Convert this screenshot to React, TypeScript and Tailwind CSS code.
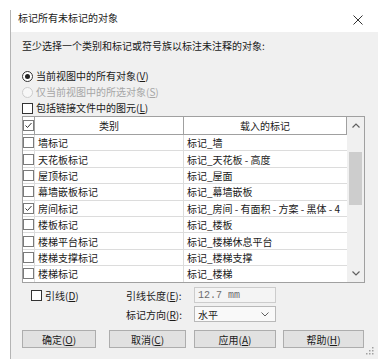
import React from "react";

const FONT = { fontFamily: '"Microsoft YaHei", "Noto Sans CJK SC", "Noto Sans", sans-serif' };

function Key({ k }: { k: string }) {
  return (
    <span>
      (<span className="underline underline-offset-[1px]">{k}</span>)
    </span>
  );
}

function Box({ checked, dark }: { checked?: boolean; dark?: boolean }) {
  return (
    <div
      className={
        "w-[11px] h-[11px] shrink-0 bg-white border flex items-center justify-center " +
        (dark ? "border-[#333333]" : "border-[#7a7a7a]")
      }
    >
      {checked && (
        <svg width="9" height="9" viewBox="0 0 9 9">
          <path d="M1.5 4.5 L3.5 6.5 L7.5 2" stroke="#333" fill="none" strokeWidth="1" />
        </svg>
      )}
    </div>
  );
}

const rows: [string, string, boolean][] = [
  ["墙标记", "标记_墙", false],
  ["天花板标记", "标记_天花板 - 高度", false],
  ["屋顶标记", "标记_屋面", false],
  ["幕墙嵌板标记", "标记_幕墙嵌板", false],
  ["房间标记", "标记_房间 - 有面积 - 方案 - 黑体 - 4", true],
  ["楼板标记", "标记_楼板", false],
  ["楼梯平台标记", "标记_楼梯休息平台", false],
  ["楼梯支撑标记", "标记_楼梯支撑", false],
  ["楼梯标记", "标记_楼梯", false],
];

function Btn({ w, ml, children }: { w: string; ml: string; children: React.ReactNode }) {
  return (
    <div
      className={
        w +
        " " +
        ml +
        " h-[18px] bg-[#e1e1e1] border border-[#adadad] flex items-center justify-center text-[10px] text-[#1a1a1a]"
      }
    >
      {children}
    </div>
  );
}

export default function App() {
  return (
    <div className="w-[378px] h-[359px] bg-white pt-[10px] overflow-hidden" style={FONT}>
      <div className="ml-[10px] h-[349px] border-l border-[#b4b4b4] flex flex-col">
        <div className="h-[22px] bg-white flex items-start justify-between pl-[7px] pr-[15px]">
          <span className="text-[10px] leading-[14px] mt-[1px] text-[#1a1a1a]">标记所有未标记的对象</span>
          <svg width="10" height="10" viewBox="0 0 10 10" className="mt-[5px]">
            <path d="M0.5 0.5 L9.5 9.5 M9.5 0.5 L0.5 9.5" stroke="#333" strokeWidth="1" />
          </svg>
        </div>
        <div className="flex-1 bg-[#f0f0f0] pl-[11px] flex flex-col text-[10px] text-[#1a1a1a] relative">
          <div className="mt-[7px] h-[14px] leading-[14px]">至少选择一个类别和标记或符号族以标注未注释的对象:</div>

          <div className="mt-[16px] h-[14px] flex items-center">
            <div className="w-[11px] h-[11px] rounded-full border border-[#333] bg-white flex items-center justify-center">
              <div className="w-[5px] h-[5px] rounded-full bg-[#222]" />
            </div>
            <span className="ml-[3px] leading-[14px]">
              当前视图中的所有对象<Key k="V" />
            </span>
          </div>
          <div className="mt-[2px] h-[14px] flex items-center text-[#a6a6a6]">
            <div className="w-[11px] h-[11px] rounded-full border border-[#cccccc] bg-[#f7f7f7]" />
            <span className="ml-[3px] leading-[14px]">
              仅当前视图中的所选对象<Key k="S" />
            </span>
          </div>
          <div className="mt-[2px] h-[14px] flex items-center">
            <Box dark />
            <span className="ml-[3px] leading-[14px]">
              包括链接文件中的图元<Key k="L" />
            </span>
          </div>

          <div className="mt-[1px] w-[343px] h-[167px] border border-[#a0a0a0] bg-white flex overflow-hidden">
            <div className="w-[324px] flex flex-col">
              <div className="h-[18px] flex shrink-0">
                <div className="w-[12px] border-r border-b border-[#a0a0a0] flex items-center justify-center">
                  <Box checked />
                </div>
                <div className="w-[149px] border-r border-b border-[#a0a0a0] flex items-center justify-center">
                  类别
                </div>
                <div className="flex-1 border-r border-b border-[#a0a0a0] flex items-center justify-center">
                  载入的标记
                </div>
              </div>
              {rows.map(([a, b, c]) => (
                <div key={a} className="h-[16.4px] shrink-0 flex border-b border-[#dcdcdc]">
                  <div className="w-[12px] border-r border-[#dcdcdc] flex items-center justify-center">
                    <Box checked={c} />
                  </div>
                  <div className="w-[149px] border-r border-[#dcdcdc] flex items-center pl-[3px] whitespace-nowrap overflow-hidden">
                    {a}
                  </div>
                  <div className="flex-1 flex items-center pl-[3px] whitespace-nowrap overflow-hidden">{b}</div>
                </div>
              ))}
            </div>
            <div className="w-[17px] bg-[#f0f0f0] flex flex-col">
              <div className="h-[17px] flex items-center justify-center">
                <svg width="8" height="5" viewBox="0 0 8 5">
                  <path d="M0.5 4.5 L4 1 L7.5 4.5" stroke="#606060" fill="none" strokeWidth="1.2" />
                </svg>
              </div>
              <div className="flex-1 px-[2px]">
                <div className="mt-[18px] h-[53px] bg-[#cdcdcd]" />
              </div>
              <div className="h-[17px] flex items-center justify-center">
                <svg width="8" height="5" viewBox="0 0 8 5">
                  <path d="M0.5 0.5 L4 4 L7.5 0.5" stroke="#606060" fill="none" strokeWidth="1.2" />
                </svg>
              </div>
            </div>
          </div>

          <div className="mt-[4px] h-[16px] flex items-center">
            <div className="w-[104px] pl-[9px] flex items-center">
              <Box dark />
              <span className="ml-[3px]">
                引线<Key k="D" />
              </span>
            </div>
            <div className="w-[68px]">
              引线长度<Key k="E" />:
            </div>
            <div
              className="w-[82px] h-[16px] border border-[#cccccc] bg-[#f4f4f4] flex items-center pl-[3px] text-[10px] text-[#6d6d6d]"
              style={{ fontFamily: '"Liberation Mono", monospace' }}
            >
              12.7 mm
            </div>
          </div>
          <div className="mt-[3px] h-[16px] flex items-center">
            <div className="w-[104px]" />
            <div className="w-[68px]">
              标记方向<Key k="R" />:
            </div>
            <div className="w-[82px] h-[16px] border border-[#b9b9b9] bg-[#f9f9f9] flex items-center justify-between pl-[3px] pr-[6px]">
              <span>水平</span>
              <svg width="8" height="5" viewBox="0 0 8 5">
                <path d="M0.5 0.5 L4 4 L7.5 0.5" stroke="#606060" fill="none" strokeWidth="1" />
              </svg>
            </div>
          </div>

          <div className="mt-[8px] flex">
            <Btn w="w-[74px]" ml="ml-0">
              确定<Key k="O" />
            </Btn>
            <Btn w="w-[77px]" ml="ml-[13px]">
              取消<Key k="C" />
            </Btn>
            <Btn w="w-[82px]" ml="ml-[8px]">
              应用<Key k="A" />
            </Btn>
            <Btn w="w-[81px]" ml="ml-[7px]">
              帮助<Key k="H" />
            </Btn>
          </div>

          <svg width="8" height="8" viewBox="0 0 8 8" className="absolute right-[4px] bottom-[4px]">
            <rect x="6" y="0" width="1.5" height="1.5" fill="#a0a0a0" />
            <rect x="3" y="3" width="1.5" height="1.5" fill="#a0a0a0" />
            <rect x="6" y="3" width="1.5" height="1.5" fill="#a0a0a0" />
            <rect x="0" y="6" width="1.5" height="1.5" fill="#a0a0a0" />
            <rect x="3" y="6" width="1.5" height="1.5" fill="#a0a0a0" />
            <rect x="6" y="6" width="1.5" height="1.5" fill="#a0a0a0" />
          </svg>
        </div>
      </div>
    </div>
  );
}
